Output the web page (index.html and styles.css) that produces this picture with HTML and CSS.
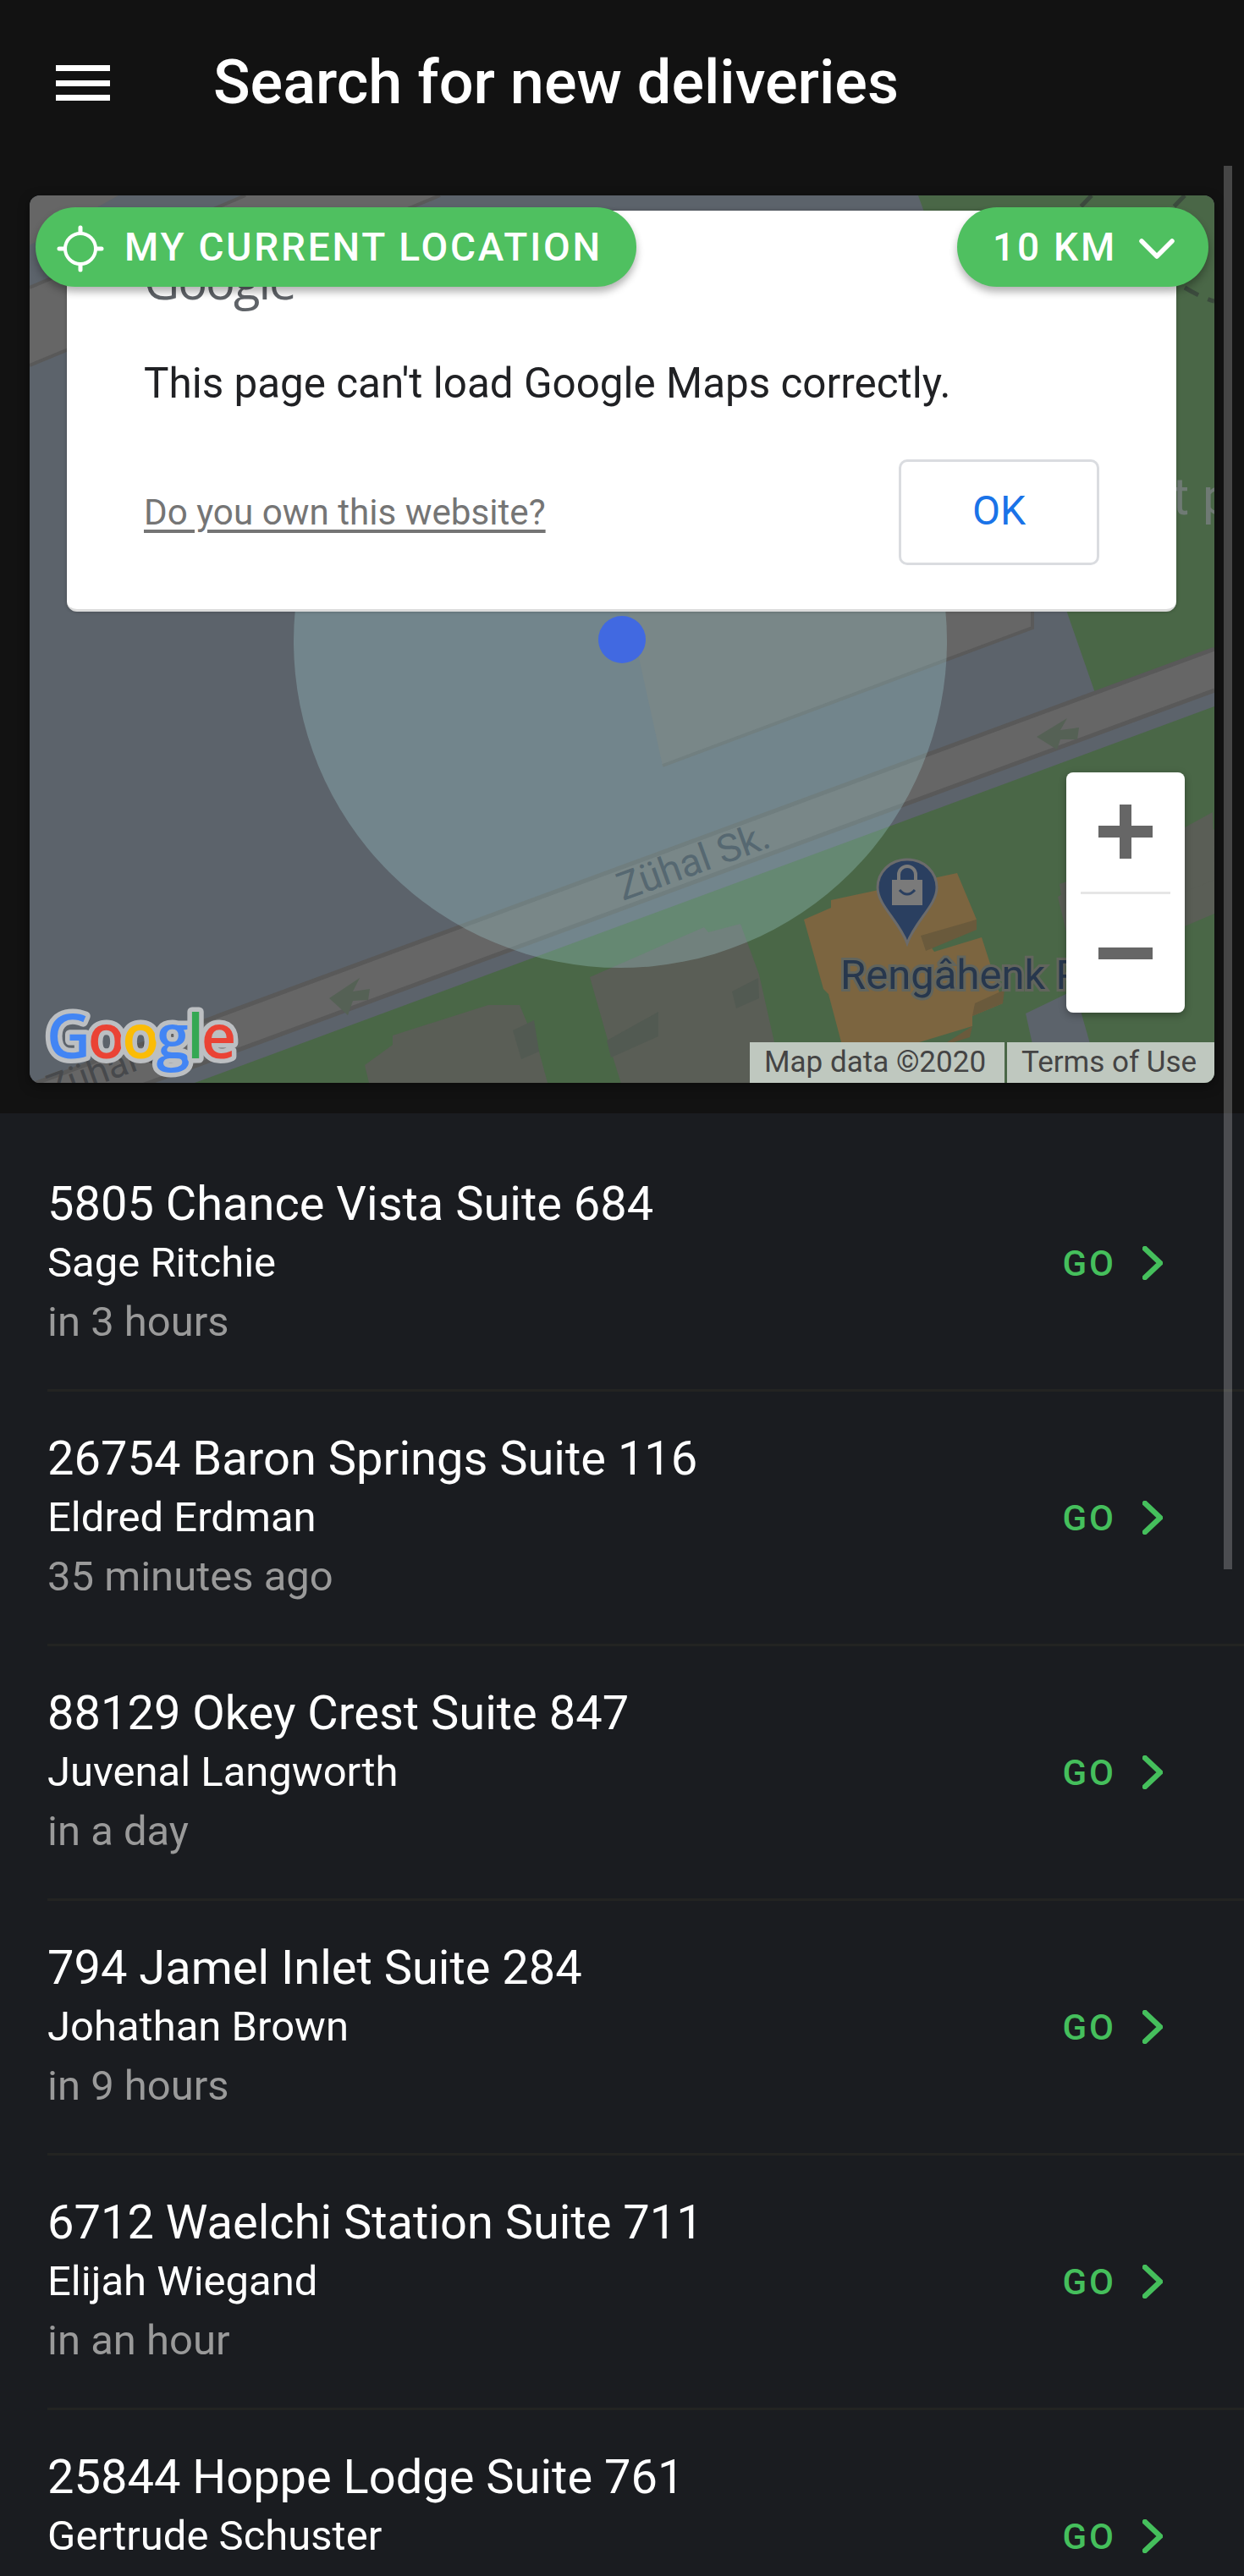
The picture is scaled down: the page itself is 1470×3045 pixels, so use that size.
FILE: index.html
```html
<!DOCTYPE html>
<html lang="en">
<head>
<meta charset="utf-8">
<title>Search for new deliveries</title>
<link rel="stylesheet" href="styles.css">
</head>
<body>
<div class="page">
  <header class="appbar">
    <button class="menu" aria-label="Menu"><span></span><span></span><span></span></button>
    <h1 class="title">Search for new deliveries</h1>
  </header>

  <section class="map-section">
    <div class="map">
      <svg class="map-art" viewBox="35 231 1400 1049" aria-hidden="true">
        <rect x="35" y="231" width="1400" height="1049" fill="#5c636b"/>
        <polygon fill="#666666" points="35,231 140,231 35,290"/>
        <polygon fill="#666666" points="290,231 520,231 35,432 35,340"/>
        <path fill="none" stroke="#595959" stroke-width="4" d="M35 340 L290 231 M35 432 L520 231"/>
        <polygon fill="#4a6747" points="1085,231 1435,231 1435,767 1294,819 1261,724"/>
        <path fill="none" stroke="#3b4a3d" stroke-width="5" stroke-dasharray="18 12" d="M1400 340 Q1420 352 1435 356 M1290 231 L1260 262 M1400 231 L1370 262"/>
        <polygon fill="#666666" points="35,1283 1435,767 1435,816 35,1332"/>
        <path fill="none" stroke="#595959" stroke-width="5" d="M35 1283 L1435 767 M35 1332 L1435 816"/>
        <polygon fill="#4a6747" points="1435,835 230,1280 1435,1280"/>
        <polygon fill="#666666" points="738,700 1220,700 1220,742 783,905"/>
        <path fill="none" stroke="#5a5a5a" stroke-width="4" d="M783 905 L1220 742 L1220 700"/>
        <polygon fill="#5a5e56" points="431,1259 464,1235 464,1224 577,1188 614,1188 637,1243 647,1280 436,1280"/>
        <polygon fill="#525a52" points="606,1218 631,1206 637,1243 616,1252"/>
        <polygon fill="#5a5e56" points="697,1155 832,1096 837,1102 875,1092 897,1152 926,1281 734,1281 720,1236"/>
        <polygon fill="#525a52" points="865,1172 896,1156 897,1180 870,1192"/>
        <polygon fill="#525a52" points="717,1230 778,1196 778,1225 722,1250"/>
        <polygon fill="#5a5e56" points="1252,1045 1435,980 1435,1080 1270,1150"/>
        <polygon fill="#5a5e56" points="1250,1060 1433,960 1435,1040 1262,1110"/>
        <polygon fill="#5c636b" points="1212,1198 1270,1170 1296,1262 1230,1280"/>
        <polygon fill="#7c6540" points="950,1087 982,1073 982,1064 1131,1032 1154,1087 1094,1110 1104,1125 1160,1108 1185,1186 1149,1201 1149,1213 1040,1246 1040,1280 1012,1280 997,1243 979,1175 973,1169"/>
        <polygon fill="#6a5a3c" points="1088,1106 1154,1087 1154,1099 1094,1124"/>
        <polygon fill="#6a5a3c" points="1149,1201 1185,1186 1187,1170 1152,1186"/>
        <polygon fill="#6a5a3c" points="1044,1280 1149,1213 1146,1226 1050,1256"/>
        <path fill="#556155" d="M1225 871 l36 -22 -8 14 22 -3 -2 14 -20 0 -4 12 z"/>
        <path fill="#556155" d="M389 1180 l36 -24 -8 16 20 -3 -2 13 -18 1 -6 17 z"/>
        <text class="street-dark" transform="translate(62 1302) rotate(-20)">Zühal Sk.</text>
        <text class="faint" x="1385" y="608">t p</text>
        <text class="poi" x="993" y="1169">Rengâhenk P</text>
        <path fill="#2a3f60" stroke="#6b6b6b" stroke-width="3" d="M1072 1016 C1051 1016 1037 1032 1037 1049 C1037 1070 1062 1088 1072 1115 C1082 1088 1107 1070 1107 1049 C1107 1032 1093 1016 1072 1016 Z"/>
        <path fill="#7a7a7a" d="M1054 1040 H1090 V1070 H1054 Z"/>
        <path fill="none" stroke="#7a7a7a" stroke-width="4" d="M1062 1040 V1034 a10 10 0 0 1 20 0 V1040"/>
        <path fill="none" stroke="#2a3f60" stroke-width="3" d="M1063 1052 q9 10 18 0"/>
        <circle cx="733" cy="758" r="386" fill="#aee0e4" fill-opacity="0.28"/>
        <text class="street" transform="translate(736 1065) rotate(-20)">Zühal Sk.</text>
        <circle cx="735" cy="756" r="28" fill="#4169e1"/>
        <text class="google" x="55" y="1251"><tspan fill="#4285f4">G</tspan><tspan fill="#ea4335">o</tspan><tspan fill="#fbbc05">o</tspan><tspan fill="#4285f4">g</tspan><tspan fill="#34a853">l</tspan><tspan fill="#ea4335">e</tspan></text>
      </svg>

      <div class="attribution">
        <span class="attr-item attr-data">Map data ©2020</span>
        <span class="attr-item attr-terms">Terms of Use</span>
      </div>

      <div class="zoom-control">
        <button class="zoom-btn" aria-label="Zoom in"><span class="glyph-plus"></span></button>
        <span class="zoom-sep"></span>
        <button class="zoom-btn" aria-label="Zoom out"><span class="glyph-minus"></span></button>
      </div>

      <div class="dialog">
        <div class="dialog-logo">Google</div>
        <p class="dialog-msg">This page can't load Google Maps correctly.</p>
        <div class="dialog-foot">
          <a class="dialog-link" href="#">Do you own this website?</a>
          <button class="dialog-ok">OK</button>
        </div>
      </div>

      <button class="pill pill-location">
        <svg class="crosshair" viewBox="0 0 56 56" aria-hidden="true"><circle cx="28" cy="28" r="18" fill="none" stroke="#fff" stroke-width="4"/><path stroke="#fff" stroke-width="5" stroke-linecap="round" d="M28 3V9M28 47V53M3 28H9M47 28H53"/></svg>
        <span>MY CURRENT LOCATION</span>
      </button>
      <button class="pill pill-radius">
        <span>10 KM</span>
        <svg class="chev-down" viewBox="0 0 42 24" aria-hidden="true"><path fill="none" stroke="#fff" stroke-width="5.5" stroke-linecap="round" stroke-linejoin="round" d="M3 3L21 21L39 3"/></svg>
      </button>
    </div>
  </section>

  <main class="list">
    <article class="row">
      <div class="row-text"><div class="addr">5805 Chance Vista Suite 684</div><div class="name">Sage Ritchie</div><div class="when">in 3 hours</div></div>
      <a class="go" href="#"><span>GO</span><svg class="chev" viewBox="0 0 24 40" aria-hidden="true"><path d="M3 3L21 20L3 37"/></svg></a>
    </article>
    <article class="row">
      <div class="row-text"><div class="addr">26754 Baron Springs Suite 116</div><div class="name">Eldred Erdman</div><div class="when">35 minutes ago</div></div>
      <a class="go" href="#"><span>GO</span><svg class="chev" viewBox="0 0 24 40" aria-hidden="true"><path d="M3 3L21 20L3 37"/></svg></a>
    </article>
    <article class="row">
      <div class="row-text"><div class="addr">88129 Okey Crest Suite 847</div><div class="name">Juvenal Langworth</div><div class="when">in a day</div></div>
      <a class="go" href="#"><span>GO</span><svg class="chev" viewBox="0 0 24 40" aria-hidden="true"><path d="M3 3L21 20L3 37"/></svg></a>
    </article>
    <article class="row">
      <div class="row-text"><div class="addr">794 Jamel Inlet Suite 284</div><div class="name">Johathan Brown</div><div class="when">in 9 hours</div></div>
      <a class="go" href="#"><span>GO</span><svg class="chev" viewBox="0 0 24 40" aria-hidden="true"><path d="M3 3L21 20L3 37"/></svg></a>
    </article>
    <article class="row">
      <div class="row-text"><div class="addr">6712 Waelchi Station Suite 711</div><div class="name">Elijah Wiegand</div><div class="when">in an hour</div></div>
      <a class="go" href="#"><span>GO</span><svg class="chev" viewBox="0 0 24 40" aria-hidden="true"><path d="M3 3L21 20L3 37"/></svg></a>
    </article>
    <article class="row">
      <div class="row-text"><div class="addr">25844 Hoppe Lodge Suite 761</div><div class="name">Gertrude Schuster</div><div class="when">&nbsp;</div></div>
      <a class="go" href="#"><span>GO</span><svg class="chev" viewBox="0 0 24 40" aria-hidden="true"><path d="M3 3L21 20L3 37"/></svg></a>
    </article>
  </main>

  <div class="scrollbar"></div>
</div>
</body>
</html>
```

FILE: styles.css
```css
* { box-sizing: border-box; }
html, body { margin: 0; padding: 0; background: #1a1c20; }
body { font-family: Roboto, "Liberation Sans", sans-serif; color: #fff; }
button { font-family: inherit; border: 0; background: none; padding: 0; margin: 0; }
a { text-decoration: none; }

.page { position: relative; width: 1470px; height: 3045px; overflow: hidden; }

.appbar { height: 196px; background: #121212; display: flex; align-items: center; padding-left: 66px; }
.menu { width: 64px; height: 42px; display: flex; flex-direction: column; justify-content: space-between; margin-right: 122px; }
.menu span { display: block; height: 7px; background: #fff; }
.title { margin: 0; font-size: 72px; font-weight: 500; line-height: 1; color: #fff; }

.map-section { height: 1120px; background: #121212; padding: 35px 35px 36px; }
.map { position: relative; width: 1400px; height: 1049px; border-radius: 12px; overflow: hidden; box-shadow: 0 4px 14px rgba(0,0,0,.4); }
.map-art { position: absolute; inset: 0; width: 100%; height: 100%; display: block; }
.street { font: 400 46px Roboto, sans-serif; fill: #566871; }
.street-dark { font: 400 44px Roboto, sans-serif; fill: #47494c; }
.faint { font: 400 62px Roboto, sans-serif; fill: #6f7a74; }
.poi { font: 400 49px Roboto, sans-serif; fill: #27374d; stroke: #62655d; stroke-width: 6px; paint-order: stroke; }
.google { font: 600 72px "Open Sans", sans-serif; letter-spacing: -3.5px; stroke: #bcbfc2; stroke-width: 11px; paint-order: stroke; stroke-linejoin: round; }

.attribution { position: absolute; right: 0; bottom: 0; height: 48px; display: flex; gap: 3px; }
.attr-item { background: #bfc8bf; color: #444; font-size: 35px; line-height: 48px; white-space: nowrap; }
.attr-data { width: 301px; padding-left: 17px; }
.attr-terms { width: 245px; padding-left: 17px; }

.zoom-control { position: absolute; left: 1225px; top: 682px; width: 140px; height: 284px; background: #fff; border-radius: 8px; box-shadow: 0 3px 10px rgba(0,0,0,.3); display: flex; flex-direction: column; align-items: center; }
.zoom-btn { flex: 1; width: 100%; display: flex; align-items: center; justify-content: center; }
.zoom-sep { width: 106px; height: 3px; background: #e6e6e6; }
.glyph-plus, .glyph-minus { display: block; position: relative; width: 64px; height: 14px; background: #666; }
.glyph-plus::after { content: ""; position: absolute; left: 25px; top: -25px; width: 14px; height: 64px; background: #666; }

.dialog { position: absolute; left: 44px; top: 18px; width: 1311px; height: 474px; background: #fff; border-radius: 12px; border-bottom: 3px solid #dcdcdc; box-shadow: 0 0 4px rgba(0,0,0,.25); padding: 0 91px; display: flex; flex-direction: column; }
.dialog-logo { margin-top: 43px; height: 80px; font: 500 58px/80px "Open Sans", sans-serif; color: #5f6368; letter-spacing: -2px; }
.dialog-msg { margin: 53px 0 0; font-size: 49.4px; line-height: 56px; color: #202124; white-space: nowrap; }
.dialog-foot { margin-top: 62px; display: flex; align-items: center; justify-content: space-between; }
.dialog-link { font-size: 42.2px; color: #757575; text-decoration: underline; text-underline-offset: 6px; }
.dialog-ok { width: 237px; height: 125px; padding-bottom: 4px; border: 3px solid #dadce0; border-radius: 10px; background: #fff; color: #1a73e8; font-size: 48px; }

.pill { position: absolute; top: 14px; height: 94px; border-radius: 47px; background: #4fc060; color: #fff; display: flex; align-items: center; font-size: 46px; font-weight: 500; letter-spacing: 2.8px; box-shadow: 0 6px 10px rgba(0,0,0,.3); white-space: nowrap; }
.pill-location { left: 7px; width: 710px; padding-left: 25px; gap: 24px; }
.crosshair { width: 56px; height: 56px; flex: none; margin-top: 4px; }
.pill-radius { left: 1096px; width: 297px; padding-left: 42px; gap: 26px; }
.chev-down { width: 42px; height: 24px; flex: none; margin-top: 4px; }

.list { background: #1a1c20; padding: 28px 0 0 56px; }
.row { height: 301px; border-bottom: 3px solid #232422; display: flex; align-items: center; padding-right: 96px; }
.row-text { flex: 1; min-width: 0; }
.addr { font-size: 56px; line-height: 70px; color: #fff; }
.name { font-size: 49px; line-height: 70px; color: #fff; }
.when { font-size: 49px; line-height: 70px; color: #9a9a9a; }
.go { display: flex; align-items: center; gap: 31px; color: #45bf5c; font-size: 42px; font-weight: 500; letter-spacing: 3px; }
.chev { width: 24px; height: 40px; flex: none; }
.chev path { fill: none; stroke: #45bf5c; stroke-width: 6.5; stroke-linecap: round; stroke-linejoin: round; }

.scrollbar { position: absolute; left: 1446px; top: 196px; width: 10px; height: 1659px; background: rgba(255,255,255,.22); }
```
